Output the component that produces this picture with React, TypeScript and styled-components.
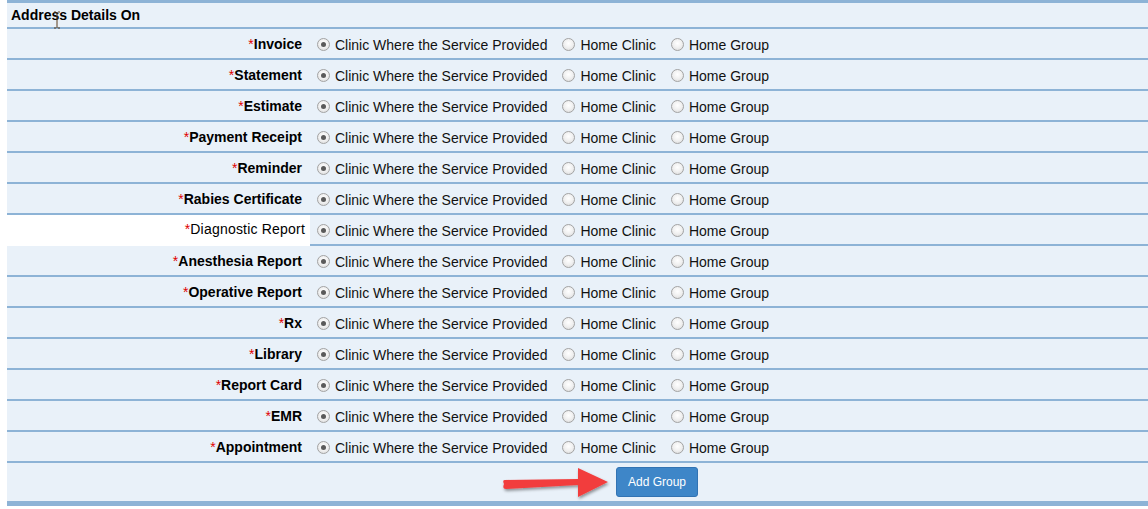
import React from "react";
import styled, { createGlobalStyle } from "styled-components";

const GlobalStyle = createGlobalStyle`
  html, body { margin: 0; padding: 0; background: #ffffff; }
  body { font-family: "Liberation Sans", Arial, sans-serif; }
`;

const BORDER = "#8db3d6";
const BG = "#e9f1f9";

const Page = styled.div`
  position: relative;
  width: 1148px;
  height: 509px;
  padding-left: 7px;
  box-sizing: border-box;
`;

const Panel = styled.div`
  width: 1141px;
  border-top: 3px solid ${BORDER};
  border-bottom: 5px solid ${BORDER};
  background: ${BG};
`;

const Header = styled.div`
  height: 24px;
  border-bottom: 2px solid ${BORDER};
  display: flex;
  align-items: center;
  padding-left: 4px;
  font-size: 14px;
  font-weight: bold;
  color: #000;
`;

const Row = styled.div`
  display: grid;
  grid-template-columns: 303px 1fr;
  height: 31px;
`;

const LabelCell = styled.div<{ $plain?: boolean }>`
  display: flex;
  align-items: center;
  justify-content: flex-end;
  box-sizing: border-box;
  padding-right: ${(p) => (p.$plain ? "5px" : "8px")};
  padding-bottom: ${(p) => (p.$plain ? "3px" : "0")};
  background: ${(p) => (p.$plain ? "#ffffff" : BG)};
  border-bottom: ${(p) => (p.$plain ? "none" : `2px solid ${BORDER}`)};
  font-size: 14px;
  font-weight: ${(p) => (p.$plain ? "normal" : "bold")};
  letter-spacing: ${(p) => (p.$plain ? "0.2px" : "0")};
  color: #000;
  white-space: nowrap;
`;

const Star = styled.span`
  color: #e00000;
  font-weight: normal;
`;

const OptionsCell = styled.div`
  display: flex;
  align-items: center;
  padding-left: 7px;
  padding-top: 1px;
  box-sizing: border-box;
  border-bottom: 2px solid ${BORDER};
  gap: 15px;
`;

const Option = styled.label`
  display: flex;
  align-items: center;
  gap: 5px;
  font-size: 14px;
  color: #111;
  white-space: nowrap;
`;

const OptionText = styled.span`
  padding-top: 2px;
`;

const Radio = styled.span<{ $checked?: boolean }>`
  width: 13px;
  height: 13px;
  box-sizing: border-box;
  border-radius: 50%;
  border: 1px solid #a3a3a3;
  background: radial-gradient(circle at 50% 40%, #ffffff 0%, #f0f0f0 50%, #d6d6d6 100%);
  display: flex;
  align-items: center;
  justify-content: center;
  &::after {
    content: "";
    display: ${(p) => (p.$checked ? "block" : "none")};
    width: 5px;
    height: 5px;
    border-radius: 50%;
    background: #5a5a5a;
  }
`;

const FooterRow = styled.div`
  height: 38px;
  display: flex;
  align-items: center;
  padding-left: 609px;
`;

const Button = styled.button`
  height: 30px;
  padding: 0 11px;
  background: #3e86c8;
  border: 1px solid #3273b3;
  border-radius: 3px;
  color: #fff;
  font-family: "Liberation Sans", Arial, sans-serif;
  font-size: 12px;
`;

const Arrow = styled.svg`
  position: absolute;
  left: 495px;
  top: 462px;
  overflow: visible;
`;

const Cursor = styled.svg`
  position: absolute;
  left: 53px;
  top: 11px;
`;

const labels: { name: string; plain?: boolean }[] = [
  { name: "Invoice" },
  { name: "Statement" },
  { name: "Estimate" },
  { name: "Payment Receipt" },
  { name: "Reminder" },
  { name: "Rabies Certificate" },
  { name: "Diagnostic Report", plain: true },
  { name: "Anesthesia Report" },
  { name: "Operative Report" },
  { name: "Rx" },
  { name: "Library" },
  { name: "Report Card" },
  { name: "EMR" },
  { name: "Appointment" },
];

const options = ["Clinic Where the Service Provided", "Home Clinic", "Home Group"];

export default function App() {
  return (
    <>
      <GlobalStyle />
      <Page>
        <Panel>
          <Header>Address Details On</Header>
          {labels.map((l) => (
            <Row key={l.name}>
              <LabelCell $plain={l.plain}>
                <Star>*</Star>
                {l.name}
              </LabelCell>
              <OptionsCell>
                {options.map((o, i) => (
                  <Option key={o}>
                    <Radio $checked={i === 0} />
                    <OptionText>{o}</OptionText>
                  </Option>
                ))}
              </OptionsCell>
            </Row>
          ))}
          <FooterRow>
            <Button>Add Group</Button>
          </FooterRow>
        </Panel>
        <Arrow width="120" height="40" viewBox="0 0 120 40">
          <defs>
            <filter id="sh" x="-20%" y="-40%" width="140%" height="180%">
              <feDropShadow dx="1" dy="2" stdDeviation="1.5" floodColor="#000" floodOpacity="0.4" />
            </filter>
          </defs>
          <path
            d="M9 22 Q7 27 11 27 L83 23 L83 35 L113 20 L83 6 L83 17 L10 18 Q7 18 9 22 Z"
            fill="#f23d3d"
            filter="url(#sh)"
          />
        </Arrow>
        <Cursor width="8" height="18" viewBox="0 0 8 18">
          <path d="M1 1 H3 M5 1 H7 M4 1 V17 M1 17 H3 M5 17 H7" stroke="#5a3a1a" strokeWidth="1" fill="none" />
        </Cursor>
      </Page>
    </>
  );
}
